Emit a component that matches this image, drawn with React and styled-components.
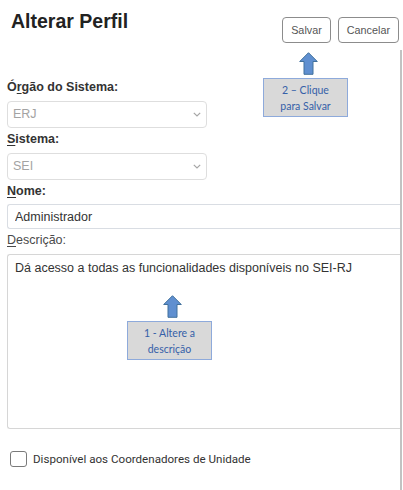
import React from "react";
import styled, { createGlobalStyle } from "styled-components";

const GlobalStyle = createGlobalStyle`
  body {
    margin: 0;
    background: #ffffff;
    font-family: "Liberation Sans", Arial, sans-serif;
  }
`;

export default function App() {
  return (
    <Page>
      <GlobalStyle />
      <Header>
        <Title>Alterar Perfil</Title>
        <Actions>
          <ActionButton>Salvar</ActionButton>
          <ActionButton>Cancelar</ActionButton>
        </Actions>
      </Header>

      <Body>
        <Label bold>Ó<u>r</u>gão do Sistema:</Label>
        <SelectBox>
          <SelectValue>ERJ</SelectValue>
          <Chevron />
        </SelectBox>

        <Label bold>
          <u>S</u>istema:
        </Label>
        <SelectBox>
          <SelectValue>SEI</SelectValue>
          <Chevron />
        </SelectBox>

        <Label bold>
          <u>N</u>ome:
        </Label>
        <TextInput defaultValue="Administrador" readOnly />

        <Label>
          <u>D</u>escrição:
        </Label>
        <TextArea
          defaultValue="Dá acesso a todas as funcionalidades disponíveis no SEI-RJ"
          readOnly
        />

        <CheckRow>
          <CheckBox />
          <CheckLabel>Disponível aos Coordenadores de Unidade</CheckLabel>
        </CheckRow>
      </Body>

      <Callout top={52} left={263}>
        <UpArrow />
        <CalloutBox>
          2 – Clique
          <br />
          para Salvar
        </CalloutBox>
      </Callout>

      <Callout top={295} left={127}>
        <UpArrow />
        <CalloutBox>
          1 - Altere a
          <br />
          descrição
        </CalloutBox>
      </Callout>
    </Page>
  );
}

function Chevron() {
  return (
    <svg width="8" height="5" viewBox="0 0 8 5">
      <path d="M0.8 0.8 L4 4 L7.2 0.8" fill="none" stroke="#a6a6a6" strokeWidth="1.2" />
    </svg>
  );
}

function UpArrow() {
  return (
    <ArrowSvg width="19" height="23" viewBox="0 0 19 23">
      <polygon
        points="9.5,0.7 18.3,9.5 14,9.5 14,22.3 5,22.3 5,9.5 0.7,9.5"
        fill="#5f8fd0"
        stroke="#41719c"
        strokeWidth="1"
      />
    </ArrowSvg>
  );
}

const Page = styled.div`
  position: relative;
  width: 403px;
  height: 490px;
  overflow: hidden;
  background: #ffffff;
`;

const Header = styled.div`
  display: flex;
  justify-content: space-between;
  align-items: flex-start;
  height: 50px;
  padding: 0 4px 0 11px;
  box-sizing: border-box;
`;

const Title = styled.h1`
  margin: 10px 0 0;
  font-size: 19.5px;
  line-height: 22px;
  font-weight: bold;
  color: #222222;
`;

const Actions = styled.div`
  display: flex;
  gap: 7px;
  margin-top: 17px;
`;

const ActionButton = styled.button`
  height: 26px;
  padding: 0 8px;
  border: 1px solid #8c8c8c;
  border-radius: 4px;
  background: #ffffff;
  font-family: "Liberation Sans", Arial, sans-serif;
  font-size: 10.8px;
  color: #555555;
  cursor: pointer;
`;

const Body = styled.div`
  display: flex;
  flex-direction: column;
  align-items: flex-start;
  width: 402px;
  height: 440px;
  box-sizing: border-box;
  padding: 30px 0 0 7px;
  border-right: 2px solid #c2c2c2;
`;

const Label = styled.label`
  display: block;
  margin: 4px 0 6px;
  font-size: 12.5px;
  line-height: 15px;
  font-weight: ${(p) => (p.bold ? "bold" : "normal")};
  color: ${(p) => (p.bold ? "#333333" : "#4a4a4a")};

  &:first-child {
    margin-top: 0;
  }

  u {
    text-decoration-thickness: 1px;
    text-underline-offset: 2px;
  }
`;

const SelectBox = styled.div`
  display: flex;
  align-items: center;
  justify-content: space-between;
  width: 200px;
  height: 27px;
  box-sizing: border-box;
  padding: 0 5px 0 5px;
  border: 1px solid #dedede;
  border-radius: 4px;
  background: #ffffff;
`;

const SelectValue = styled.span`
  font-size: 12.5px;
  line-height: 15px;
  color: #a3a3a3;
`;

const TextInput = styled.input`
  width: 393px;
  height: 25px;
  box-sizing: border-box;
  margin: -1px 0 0;
  padding: 0 7px;
  border: 1px solid #d9dde3;
  border-radius: 3px 0 0 3px;
  border-right: none;
  font-family: "Liberation Sans", Arial, sans-serif;
  font-size: 12.5px;
  color: #333333;
  outline: none;
`;

const TextArea = styled.textarea`
  display: block;
  width: 393px;
  height: 175px;
  box-sizing: border-box;
  margin: 0;
  padding: 6px 7px;
  border: 1px solid #d6d6d6;
  border-right: none;
  border-radius: 3px 0 0 3px;
  font-family: "Liberation Sans", Arial, sans-serif;
  font-size: 12.5px;
  line-height: 15px;
  color: #333333;
  resize: none;
  outline: none;
`;

const CheckRow = styled.div`
  display: flex;
  align-items: center;
  gap: 6px;
  margin: 22px 0 0 3px;
`;

const CheckBox = styled.span`
  display: block;
  width: 17px;
  height: 16px;
  box-sizing: border-box;
  border: 1px solid #7a7a7a;
  border-radius: 3px;
  background: #ffffff;
`;

const CheckLabel = styled.span`
  font-family: Roboto, "Liberation Sans", Arial, sans-serif;
  font-size: 11.6px;
  color: #333333;
`;

const Callout = styled.div`
  position: absolute;
  top: ${(p) => p.top}px;
  left: ${(p) => p.left}px;
  display: flex;
  flex-direction: column;
  align-items: center;
  gap: 3px;
`;

const ArrowSvg = styled.svg`
  display: block;
  margin-left: 6px;
`;

const CalloutBox = styled.div`
  width: 85px;
  height: 39px;
  box-sizing: border-box;
  display: flex;
  align-items: center;
  justify-content: center;
  text-align: center;
  background: #d9d9d9;
  border: 1.5px solid #8eaadb;
  font-family: Lato, "Liberation Sans", sans-serif;
  font-size: 10.5px;
  line-height: 16px;
  color: #3560a8;
`;
